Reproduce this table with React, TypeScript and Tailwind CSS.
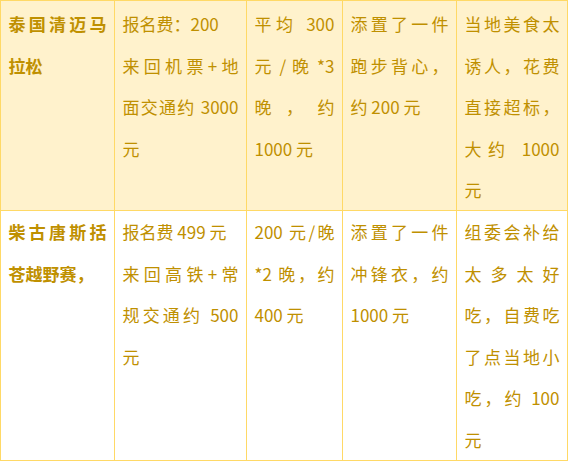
import React from 'react';

type Cell = { lines: string[]; bold?: boolean };

const rows: Array<{ bg: string; pad: string; cells: Cell[] }> = [
  {
    bg: 'bg-[#fff2cc]',
    pad: 'pt-[2px]',
    cells: [
      { lines: ['泰国清迈马', '拉松'], bold: true },
      { lines: ['报名费：200', '来回机票+地', '面交通约 3000', '元'] },
      { lines: ['平均 300', '元 / 晚 *3', '晚 ， 约', '1000 元'] },
      { lines: ['添置了一件', '跑步背心，', '约 200 元'] },
      { lines: ['当地美食太', '诱人，花费', '直接超标，', '大约 1000', '元'] },
    ],
  },
  {
    bg: 'bg-white',
    pad: 'pt-0',
    cells: [
      { lines: ['柴古唐斯括', '苍越野赛，'], bold: true },
      { lines: ['报名费 499 元', '来回高铁+常', '规交通约 500', '元'] },
      { lines: ['200 元/晚', '*2 晚，约', '400 元'] },
      { lines: ['添置了一件', '冲锋衣，约', '1000 元'] },
      { lines: ['组委会补给', '太多太好', '吃，自费吃', '了点当地小', '吃，约 100', '元'] },
    ],
  },
];

// lines that sit at the end of a paragraph are not stretched
const lastLines = new Set(['报名费：200', '元', '1000 元', '约 200 元', '报名费 499 元', '400 元', '拉松', '苍越野赛，']);

const App = () => {
  return (
    <div
      className="w-[570px] h-[461px] bg-white text-[#bf9000] text-[17px] leading-[41.5px]"
      style={{ fontFamily: '"Noto Sans CJK SC", "Noto Sans", sans-serif' }}
    >
      <div className="grid grid-cols-[114px_132px_96px_114px_111px] grid-rows-[210px_250px] w-[568px] border-l border-t border-[#ffd966]">
        {rows.map((row, r) =>
          row.cells.map((cell, c) => (
            <div
              key={`${r}-${c}`}
              className={`${row.bg} ${row.pad} border-r border-b border-[#ffd966] pl-[7.5px] pr-[7.5px] overflow-visible`}
            >
              {cell.lines.map((line, i) => {
                const stretch = !lastLines.has(line);
                return (
                  <div
                    key={i}
                    className={`whitespace-nowrap ${cell.bold ? 'font-bold' : ''} ${stretch ? 'text-justify [text-align-last:justify] whitespace-normal' : ''}`}
                  >
                    {line}
                  </div>
                );
              })}
            </div>
          )),
        )}
      </div>
    </div>
  );
};

export default App;
